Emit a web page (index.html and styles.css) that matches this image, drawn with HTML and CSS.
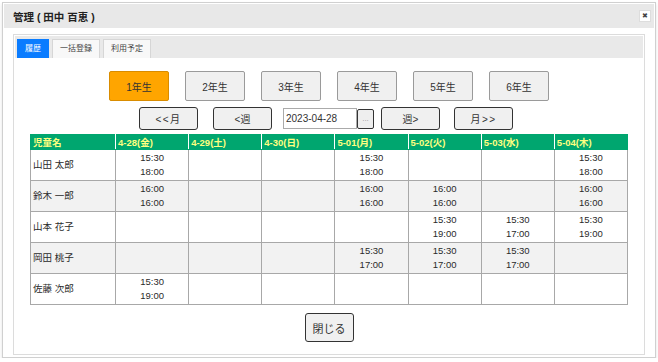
FILE: index.html
```html
<!DOCTYPE html>
<html lang="ja">
<head>
    <meta charset="UTF-8">
    <meta name="viewport" content="width=device-width, initial-scale=1.0">
    <title>管理</title>
    <link rel="stylesheet" href="styles.css">
</head>
<body>
    <div class="dialog">
        <div class="dialog-head">
            <span class="dialog-title">管理 ( 田中 百恵 )</span>
            <span class="dialog-close">&#x2716;</span>
        </div>
        <div class="dialog-body">
            <div class="panel">
                <div class="tabbar">
                    <span class="tab active">履歴</span>
                    <span class="tab">一括登録</span>
                    <span class="tab">利用予定</span>
                </div>

                <div class="grades">
                    <button class="grade selected">1年生</button>
                    <button class="grade">2年生</button>
                    <button class="grade">3年生</button>
                    <button class="grade">4年生</button>
                    <button class="grade">5年生</button>
                    <button class="grade">6年生</button>
                </div>

                <div class="nav">
                    <button class="nav-btn wide gap-15">&lt;&lt;月</button>
                    <button class="nav-btn gap-11">&lt;週</button>
                    <span class="date-box gap-7">
                        <input class="date-input" type="text" value="2023-04-28">
                        <button class="date-pick">...</button>
                    </span>
                    <button class="nav-btn gap-14">週&gt;</button>
                    <button class="nav-btn wide">月&gt;&gt;</button>
                </div>

                <table class="schedule">
                    <colgroup>
                        <col class="col-name">
                        <col><col><col><col><col><col><col>
                    </colgroup>
                    <tr>
                        <th>児童名</th>
                        <th>4-28(金)</th>
                        <th>4-29(土)</th>
                        <th>4-30(日)</th>
                        <th>5-01(月)</th>
                        <th>5-02(火)</th>
                        <th>5-03(水)</th>
                        <th>5-04(木)</th>
                    </tr>
                    <tr>
                        <td class="name">山田 太郎</td>
                        <td>15:30<br>18:00</td>
                        <td></td>
                        <td></td>
                        <td>15:30<br>18:00</td>
                        <td></td>
                        <td></td>
                        <td>15:30<br>18:00</td>
                    </tr>
                    <tr>
                        <td class="name">鈴木 一郎</td>
                        <td>16:00<br>16:00</td>
                        <td></td>
                        <td></td>
                        <td>16:00<br>16:00</td>
                        <td>16:00<br>16:00</td>
                        <td></td>
                        <td>16:00<br>16:00</td>
                    </tr>
                    <tr>
                        <td class="name">山本 花子</td>
                        <td></td>
                        <td></td>
                        <td></td>
                        <td></td>
                        <td>15:30<br>19:00</td>
                        <td>15:30<br>17:00</td>
                        <td>15:30<br>19:00</td>
                    </tr>
                    <tr>
                        <td class="name">岡田 桃子</td>
                        <td></td>
                        <td></td>
                        <td></td>
                        <td>15:30<br>17:00</td>
                        <td>15:30<br>17:00</td>
                        <td>15:30<br>17:00</td>
                        <td></td>
                    </tr>
                    <tr>
                        <td class="name">佐藤 次郎</td>
                        <td>15:30<br>19:00</td>
                        <td></td>
                        <td></td>
                        <td></td>
                        <td></td>
                        <td></td>
                        <td></td>
                    </tr>
                </table>

                <div class="footer">
                    <button class="close-btn">閉じる</button>
                </div>
            </div>
        </div>
    </div>
</body>
</html>
```

FILE: styles.css
```css
body {
    margin: 0;
    background: #fff;
    color: #333;
    font-family: "Liberation Sans", "Noto Sans CJK JP", sans-serif;
}
button, input {
    font-family: inherit;
    color: #333;
}
.dialog {
    margin: 2px 2px 0 2px;
    height: 354px;
    border: 1px solid #d0d0d0;
    box-shadow: 0 2px 3px rgba(0, 0, 0, 0.12);
    background: #fff;
}
.dialog-head {
    margin: 1px;
    height: 24px;
    background: #e8e8e8;
    display: flex;
    align-items: center;
    justify-content: space-between;
    padding: 0 3px 0 9px;
}
.dialog-title {
    font-size: 10.5px;
    font-weight: bold;
    color: #222;
}
.dialog-close {
    width: 10px;
    height: 10px;
    border: 1px solid #ddd;
    background: #fff;
    font-size: 7px;
    line-height: 10px;
    text-align: center;
    color: #444;
}
.dialog-body {
    padding: 5px 10px 0 10px;
}
.panel {
    height: 317px;
    border: 1px solid #dcdcdc;
    padding: 1px;
}
.tabbar {
    height: 22px;
    background: #e9e9e9;
    display: flex;
    gap: 3px;
    padding: 3px 0 0 2px;
    box-sizing: border-box;
}
.tab {
    height: 19px;
    box-sizing: border-box;
    padding: 0 7px;
    border: 1px solid #d6d6d6;
    border-bottom: none;
    background: #f8f8f8;
    font-size: 8px;
    line-height: 18px;
    color: #444;
}
.tab.active {
    background: #0a7cff;
    border-color: #0a7cff;
    color: #fff;
    width: 32px;
    text-align: center;
    padding: 0;
}
.grades {
    display: flex;
    justify-content: center;
    gap: 16px;
    margin-top: 13px;
}
.grade {
    width: 60px;
    height: 30px;
    font-size: 10px;
    background: #f0f0f0;
    border: 1px solid #9a9a9a;
    border-radius: 2px;
}
.grade.selected {
    background: #ffa500;
    border-color: #d98c00;
}
.nav {
    display: flex;
    justify-content: center;
    align-items: center;
    margin-top: 6px;
    padding-right: 6px;
}
.nav-btn {
    width: 59px;
    height: 23px;
    font-size: 10px;
    background: #f0f0f0;
    border: 1px solid #333;
    border-radius: 3px;
}
.nav-btn.wide {
    letter-spacing: 1.5px;
}
.gap-15 { margin-right: 15px; }
.gap-11 { margin-right: 11px; }
.gap-7 { margin-right: 7px; }
.gap-14 { margin-right: 14px; }
.date-box {
    display: flex;
    align-items: center;
}
.date-input {
    width: 74px;
    height: 21px;
    box-sizing: border-box;
    border: 1px solid #aaa;
    padding: 0 2px;
    font-size: 10px;
}
.date-pick {
    width: 17px;
    height: 20px;
    padding: 0;
    border: 1px solid #333;
    border-radius: 2px;
    background: #eee;
    color: #999;
    font-size: 8px;
}
.schedule {
    width: 598px;
    margin: 4px auto 0;
    border-collapse: collapse;
    table-layout: fixed;
    font-size: 9.5px;
    color: #2a2a2a;
}
.col-name {
    width: 85px;
}
.schedule th, .schedule td {
    border: 1px solid #a8a8a8;
    padding: 0;
}
.schedule th {
    height: 14px;
    background: #00a66f;
    color: #ffff80;
    text-align: left;
    padding-left: 2px;
    border-color: #00a66f #fff;
    line-height: 13px;
}
.schedule th:first-child {
    border-left-color: #00a66f;
}
.schedule th:last-child {
    border-right-color: #00a66f;
}
.schedule td {
    height: 30px;
    line-height: 14px;
    text-align: center;
    vertical-align: middle;
}
.schedule td.name {
    text-align: left;
    padding-left: 2px;
}
.schedule tr:nth-child(odd) td {
    background: #f2f2f2;
}
.footer {
    display: flex;
    justify-content: center;
    margin-top: 8px;
}
.close-btn {
    width: 49px;
    height: 29px;
    font-size: 11px;
    background: #f0f0f0;
    border: 1px solid #333;
    border-radius: 3px;
}
```
